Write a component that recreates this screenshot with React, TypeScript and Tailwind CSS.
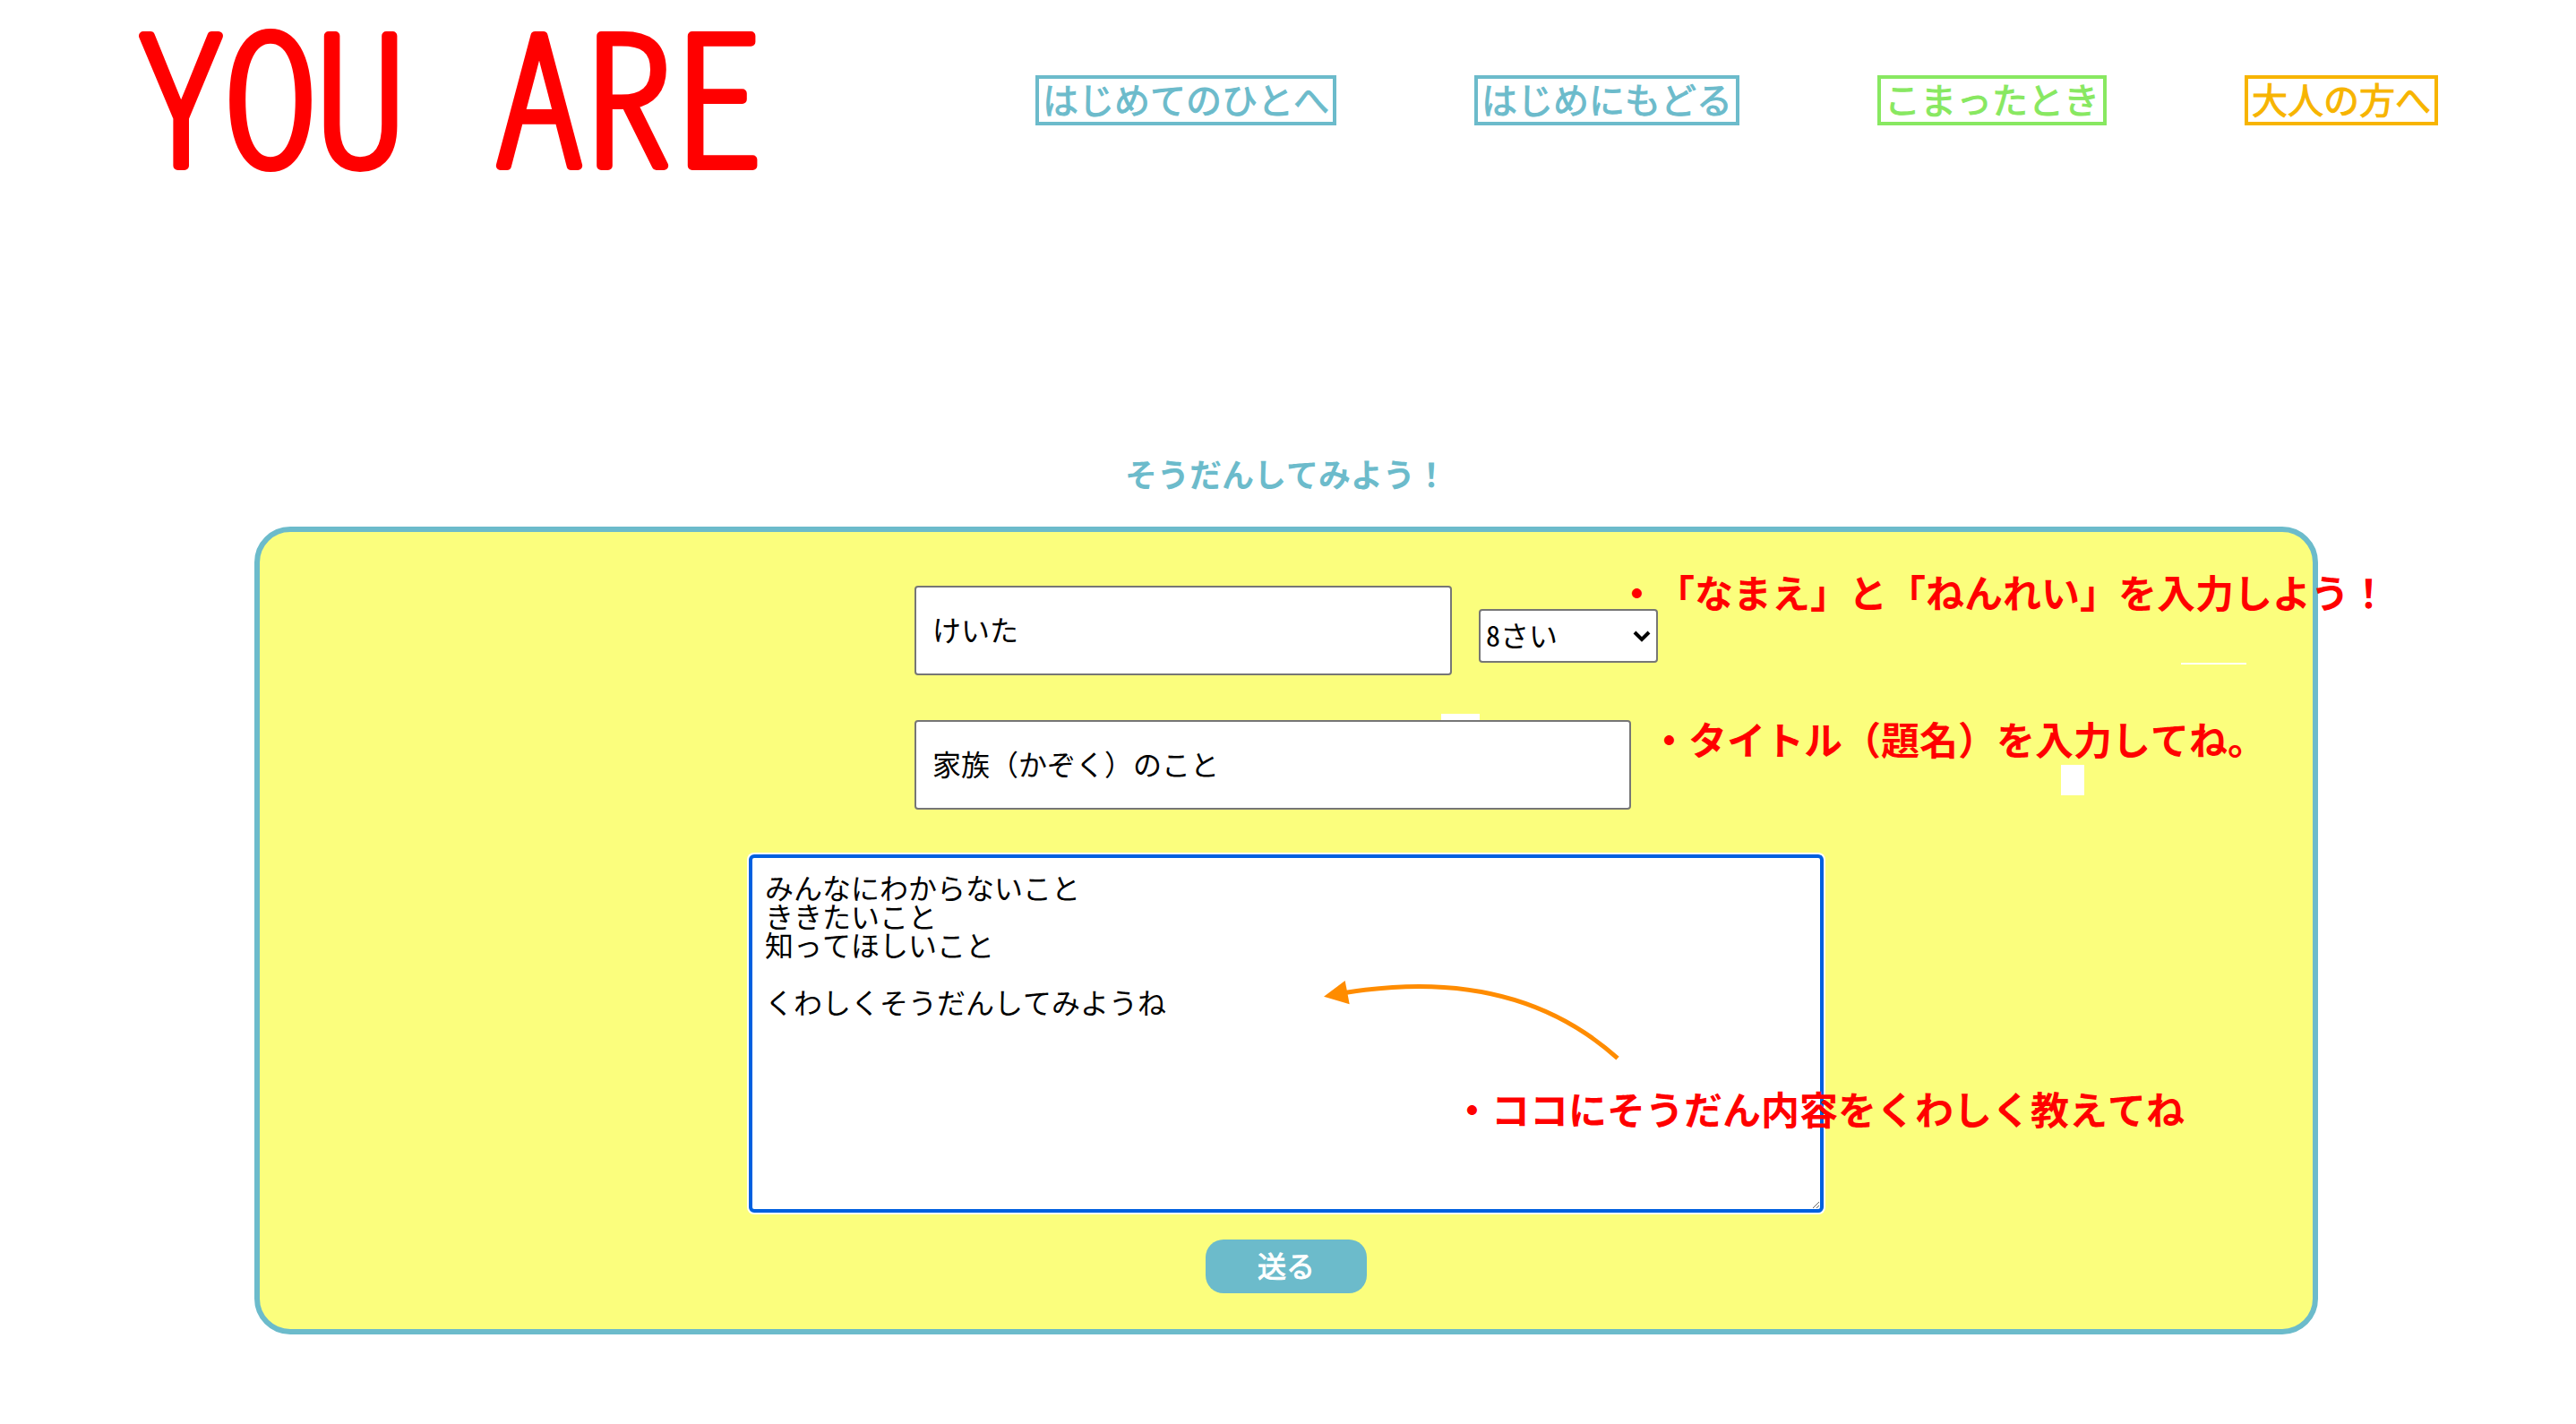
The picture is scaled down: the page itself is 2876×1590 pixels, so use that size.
import React from "react";

type NavItem = { label: string; tone: string };

const navItems: NavItem[] = [
  { label: "はじめてのひとへ", tone: "border-[#6cbbcb] text-[#6cbbcb]" },
  { label: "はじめにもどる", tone: "border-[#6cbbcb] text-[#6cbbcb]" },
  { label: "こまったとき", tone: "border-[#88e861] text-[#88e861]" },
  { label: "大人の方へ", tone: "border-[#f7b400] text-[#f7b400]" },
];

const message = `みんなにわからないこと
ききたいこと
知ってほしいこと

くわしくそうだんしてみようね`;

const fieldClass =
  "h-[100px] rounded-[4px] border-2 border-[#767676] bg-white px-[18px] pb-1 text-[32px] text-black outline-none";

const noteClass =
  "pointer-events-none absolute whitespace-nowrap text-[43px] leading-[44px] font-bold text-[#ff0000]";

function Header() {
  return (
    <header className="flex items-start justify-between px-[154px]">
      <h1>
        <svg
          className="block h-[212px] w-[700px] overflow-visible"
          viewBox="0 0 700 212"
          role="img"
          aria-label="YOU ARE"
        >
          <text
            x="-2"
            y="185"
            fill="#ff0000"
            stroke="#ff0000"
            strokeWidth="10"
            strokeLinejoin="round"
            className="whitespace-pre text-[200px] font-thin [font-feature-settings:'hwid']"
          >
            YOU ARE
          </text>
        </svg>
      </h1>
      <nav className="flex gap-[154px] pt-[84px]">
        {navItems.map((item) => (
          <a
            key={item.label}
            href="#"
            className={`border-4 px-1 pt-[2px] pb-[6px] text-[40px] leading-10 whitespace-nowrap [-webkit-text-stroke:1px] ${item.tone}`}
          >
            {item.label}
          </a>
        ))}
      </nav>
    </header>
  );
}

function AgeSelect() {
  return (
    <div className="relative mb-[14px]">
      <select
        aria-label="ねんれい"
        defaultValue="8"
        className="h-[60px] w-[200px] appearance-none rounded-[4px] border-2 border-[#767676] bg-white px-[6px] pb-1 text-[32px] leading-none text-black [font-feature-settings:'hwid']"
      >
        <option value="7">7さい</option>
        <option value="8">8さい</option>
        <option value="9">9さい</option>
      </select>
      <svg
        className="pointer-events-none absolute top-[24px] right-[8px] h-[13px] w-[20px]"
        viewBox="0 0 20 13"
        fill="none"
        stroke="#000"
        strokeWidth="4"
        aria-hidden="true"
      >
        <path d="M2 2 L10 10 L18 2" />
      </svg>
    </div>
  );
}

function Notes() {
  return (
    <>
      <span className="absolute top-[203px] left-[1319px] h-[7px] w-[43px] bg-white" />
      <span className="absolute top-[146px] left-[2145px] h-[2px] w-[73px] bg-white" />
      <span className="absolute top-[260px] left-[2011px] h-[34px] w-[26px] bg-white" />
      <p className={`${noteClass} top-[44px] left-[1516px]`}>
        ・「なまえ」と「ねんれい」を入力しよう！
      </p>
      <p className={`${noteClass} top-[208px] left-[1552px]`}>
        ・タイトル（題名）を入力してね。
      </p>
      <p className={`${noteClass} top-[621px] left-[1332px]`}>
        ・ココにそうだん内容をくわしく教えてね
      </p>
      <svg
        className="pointer-events-none absolute top-[496px] left-[1184px] h-[100px] w-[350px]"
        viewBox="0 0 350 100"
        fill="none"
        aria-hidden="true"
      >
        <path d="M29 18.3 Q217 -12 332 91.7" stroke="#ff8c00" strokeWidth="5" />
        <path d="M4 22.7 L27.7 5 L32.7 31.3 Z" fill="#ff8c00" />
      </svg>
    </>
  );
}

export default function App() {
  return (
    <div className="min-h-screen bg-white pb-[100px] font-['Noto_Sans_CJK_JP',sans-serif] [font-kerning:none] [text-spacing-trim:space-all]">
      <Header />
      <main className="mt-[298px] mr-[288px] ml-[284px]">
        <h2 className="mb-[42px] text-center text-[36px] leading-9 font-bold text-[#6cbbcb]">
          そうだんしてみよう！
        </h2>
        <form
          className="relative flex flex-col items-center rounded-[40px] border-[6px] border-[#6cbbcb] bg-[#fbfe7d] pt-[60px] pb-10"
          onSubmit={(event) => event.preventDefault()}
        >
          <div className="flex flex-col gap-[50px]">
            <div className="flex items-end gap-[30px]">
              <input
                type="text"
                aria-label="なまえ"
                defaultValue="けいた"
                className={`${fieldClass} w-[600px]`}
              />
              <AgeSelect />
            </div>
            <input
              type="text"
              aria-label="タイトル（題名）"
              defaultValue="家族（かぞく）のこと"
              className={`${fieldClass} w-[800px]`}
            />
          </div>
          <textarea
            aria-label="そうだん内容"
            defaultValue={message}
            className="mt-[50px] block h-[400px] w-[1200px] rounded-[6px] border-4 border-[#0060df] bg-white px-[14px] py-4 text-[32px] leading-8 text-black shadow-[0_0_0_2px_#ffffff] outline-none"
          />
          <button
            type="submit"
            className="mt-[30px] h-[60px] w-[180px] rounded-[20px] bg-[#6cbbcb] pb-1 text-[32px] leading-8 text-white [-webkit-text-stroke:1px]"
          >
            送る
          </button>
          <Notes />
        </form>
      </main>
    </div>
  );
}
